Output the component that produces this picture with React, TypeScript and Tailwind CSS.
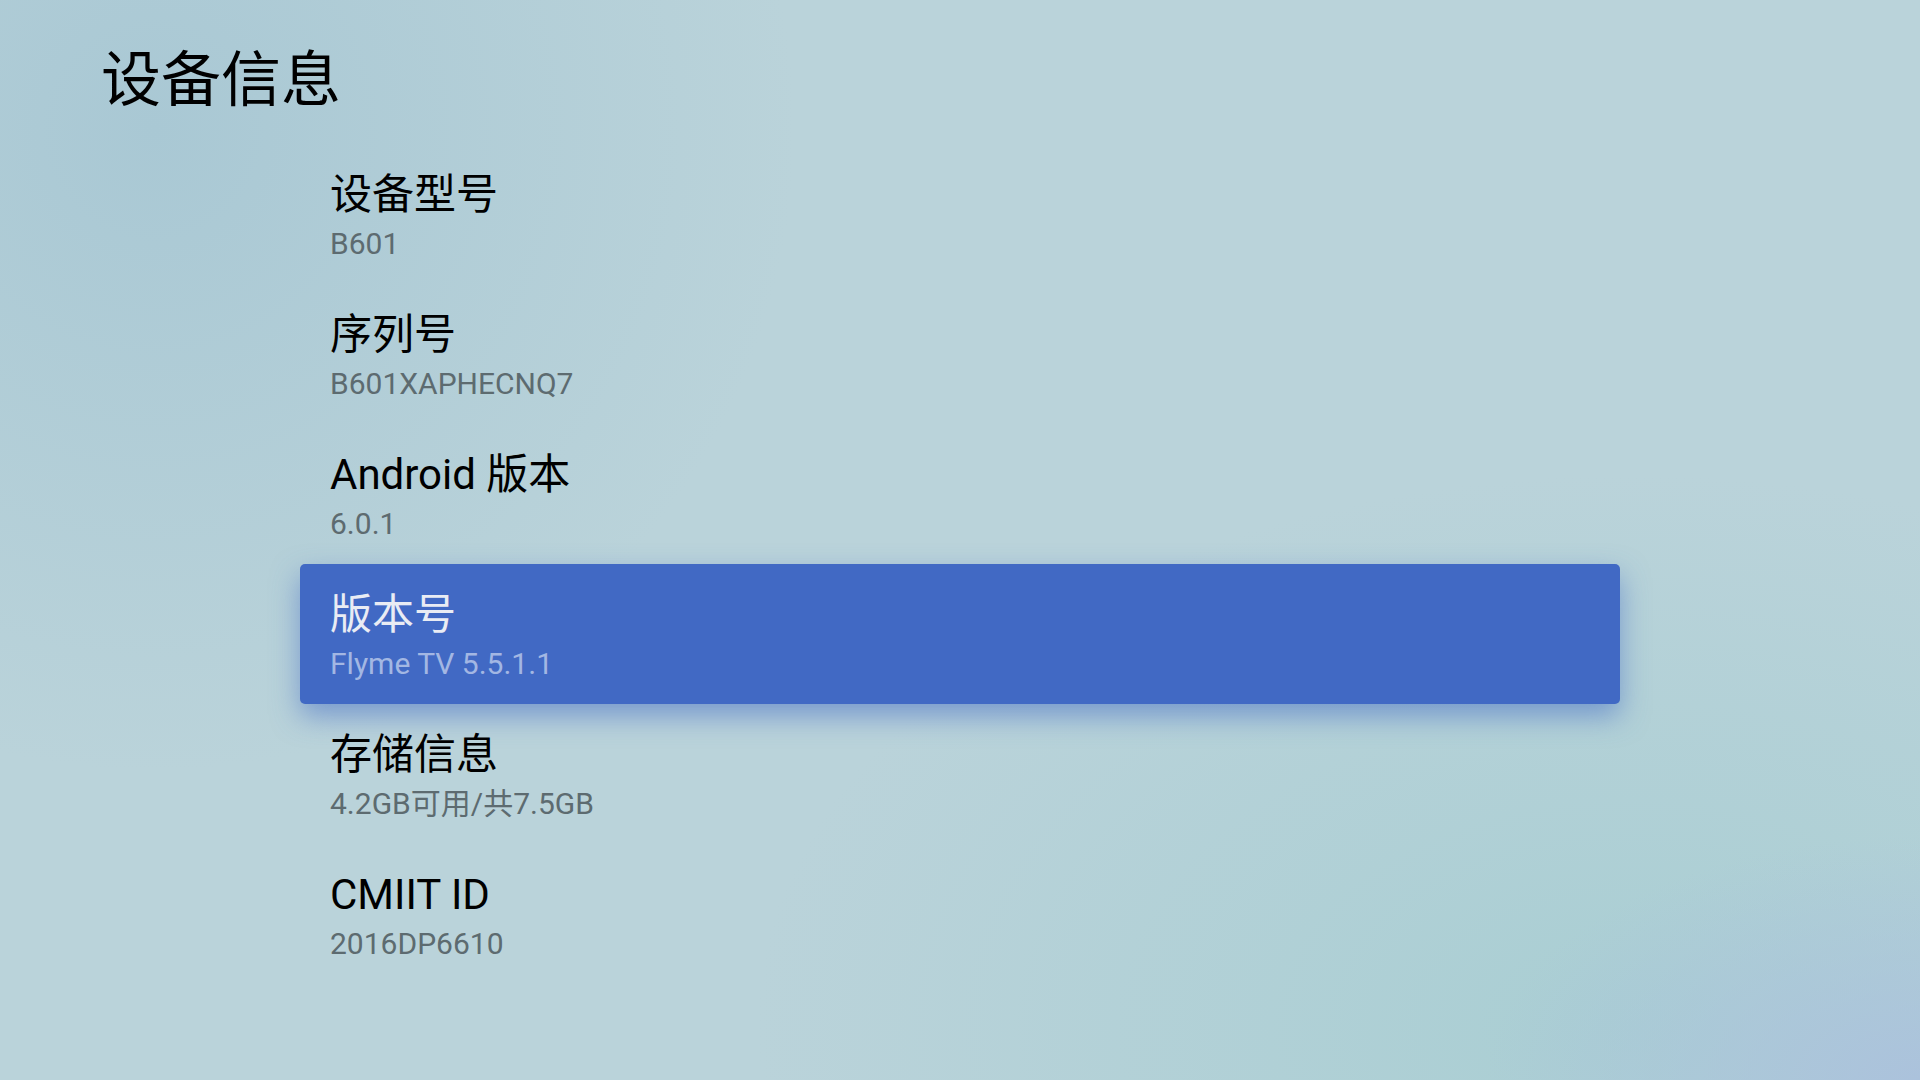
import React from 'react'

const items = [
  { title: '设备型号', value: 'B601' },
  { title: '序列号', value: 'B601XAPHECNQ7' },
  { title: 'Android 版本', value: '6.0.1' },
  { title: '版本号', value: 'Flyme TV 5.5.1.1', active: true },
  { title: '存储信息', value: '4.2GB可用/共7.5GB' },
  { title: 'CMIIT ID', value: '2016DP6610' },
]

export default function App() {
  return (
    <div
      className="w-[1920px] h-[1080px] overflow-hidden flex flex-col bg-[#bad3da] bg-[radial-gradient(circle_at_8%_12%,#a9c8d4_0%,rgba(169,200,212,0)_32%),radial-gradient(ellipse_at_100%_100%,#abc2dc_0%,rgba(171,194,220,0)_16%),radial-gradient(ellipse_at_85%_95%,#a9ced3_0%,rgba(169,206,211,0)_38%)]"
      style={{ fontFamily: 'Roboto, "Noto Sans CJK SC", sans-serif' }}
    >
      <h1 className="pl-[101px] pt-[46px] text-[60px] leading-[70px] text-black font-normal">设备信息</h1>

      <div className="mt-[28px] ml-[300px] w-[1320px] flex flex-col">
        {items.map((it) => (
          <div
            key={it.title}
            className={
              it.active
                ? 'h-[140px] pl-[30px] pt-[27px] rounded-[5px] bg-[#4169c4] shadow-[0_12px_28px_rgba(65,105,196,0.55)]'
                : 'h-[140px] pl-[30px] pt-[27px]'
            }
          >
            <div className={it.active ? 'text-[42px] leading-[48px] text-[#e9ecf4]' : 'text-[42px] leading-[48px] text-black'}>
              {it.title}
            </div>
            <div className={it.active ? 'mt-[7px] text-[30px] leading-[36px] text-[#a3b7e3]' : 'mt-[7px] text-[30px] leading-[36px] text-[#5d6b70]'}>
              {it.value}
            </div>
          </div>
        ))}
      </div>
    </div>
  )
}
